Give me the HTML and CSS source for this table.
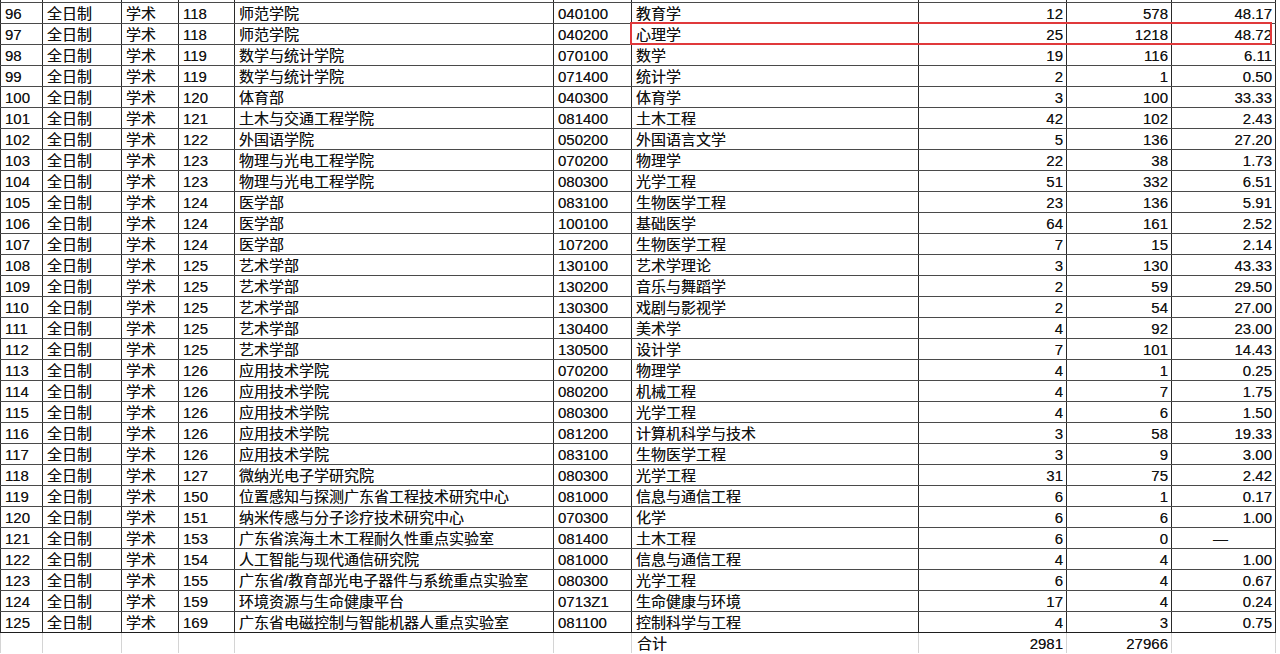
FILE: index.html
```html
<!DOCTYPE html>
<html lang="zh-CN">
<head>
<meta charset="utf-8">
<title>招生数据</title>
<link rel="stylesheet" href="styles.css">
</head>
<body>
<div class="sheet">
<table class="grid">
<colgroup>
<col class="w-a"><col class="w-b"><col class="w-c"><col class="w-d"><col class="w-e"><col class="w-f"><col class="w-g"><col class="w-h"><col class="w-i"><col class="w-j">
</colgroup>
<tbody>
<tr class="stub"><td></td><td></td><td></td><td></td><td></td><td></td><td></td><td></td><td></td><td></td></tr>
<tr><td>96</td><td>全日制</td><td>学术</td><td>118</td><td>师范学院</td><td>040100</td><td>教育学</td><td class="num">12</td><td class="num">578</td><td class="num">48.17</td></tr>
<tr><td>97</td><td>全日制</td><td>学术</td><td>118</td><td>师范学院</td><td>040200</td><td>心理学</td><td class="num">25</td><td class="num">1218</td><td class="num">48.72</td></tr>
<tr><td>98</td><td>全日制</td><td>学术</td><td>119</td><td>数学与统计学院</td><td>070100</td><td>数学</td><td class="num">19</td><td class="num">116</td><td class="num">6.11</td></tr>
<tr><td>99</td><td>全日制</td><td>学术</td><td>119</td><td>数学与统计学院</td><td>071400</td><td>统计学</td><td class="num">2</td><td class="num">1</td><td class="num">0.50</td></tr>
<tr><td>100</td><td>全日制</td><td>学术</td><td>120</td><td>体育部</td><td>040300</td><td>体育学</td><td class="num">3</td><td class="num">100</td><td class="num">33.33</td></tr>
<tr><td>101</td><td>全日制</td><td>学术</td><td>121</td><td>土木与交通工程学院</td><td>081400</td><td>土木工程</td><td class="num">42</td><td class="num">102</td><td class="num">2.43</td></tr>
<tr><td>102</td><td>全日制</td><td>学术</td><td>122</td><td>外国语学院</td><td>050200</td><td>外国语言文学</td><td class="num">5</td><td class="num">136</td><td class="num">27.20</td></tr>
<tr><td>103</td><td>全日制</td><td>学术</td><td>123</td><td>物理与光电工程学院</td><td>070200</td><td>物理学</td><td class="num">22</td><td class="num">38</td><td class="num">1.73</td></tr>
<tr><td>104</td><td>全日制</td><td>学术</td><td>123</td><td>物理与光电工程学院</td><td>080300</td><td>光学工程</td><td class="num">51</td><td class="num">332</td><td class="num">6.51</td></tr>
<tr><td>105</td><td>全日制</td><td>学术</td><td>124</td><td>医学部</td><td>083100</td><td>生物医学工程</td><td class="num">23</td><td class="num">136</td><td class="num">5.91</td></tr>
<tr><td>106</td><td>全日制</td><td>学术</td><td>124</td><td>医学部</td><td>100100</td><td>基础医学</td><td class="num">64</td><td class="num">161</td><td class="num">2.52</td></tr>
<tr><td>107</td><td>全日制</td><td>学术</td><td>124</td><td>医学部</td><td>107200</td><td>生物医学工程</td><td class="num">7</td><td class="num">15</td><td class="num">2.14</td></tr>
<tr><td>108</td><td>全日制</td><td>学术</td><td>125</td><td>艺术学部</td><td>130100</td><td>艺术学理论</td><td class="num">3</td><td class="num">130</td><td class="num">43.33</td></tr>
<tr><td>109</td><td>全日制</td><td>学术</td><td>125</td><td>艺术学部</td><td>130200</td><td>音乐与舞蹈学</td><td class="num">2</td><td class="num">59</td><td class="num">29.50</td></tr>
<tr><td>110</td><td>全日制</td><td>学术</td><td>125</td><td>艺术学部</td><td>130300</td><td>戏剧与影视学</td><td class="num">2</td><td class="num">54</td><td class="num">27.00</td></tr>
<tr><td>111</td><td>全日制</td><td>学术</td><td>125</td><td>艺术学部</td><td>130400</td><td>美术学</td><td class="num">4</td><td class="num">92</td><td class="num">23.00</td></tr>
<tr><td>112</td><td>全日制</td><td>学术</td><td>125</td><td>艺术学部</td><td>130500</td><td>设计学</td><td class="num">7</td><td class="num">101</td><td class="num">14.43</td></tr>
<tr><td>113</td><td>全日制</td><td>学术</td><td>126</td><td>应用技术学院</td><td>070200</td><td>物理学</td><td class="num">4</td><td class="num">1</td><td class="num">0.25</td></tr>
<tr><td>114</td><td>全日制</td><td>学术</td><td>126</td><td>应用技术学院</td><td>080200</td><td>机械工程</td><td class="num">4</td><td class="num">7</td><td class="num">1.75</td></tr>
<tr><td>115</td><td>全日制</td><td>学术</td><td>126</td><td>应用技术学院</td><td>080300</td><td>光学工程</td><td class="num">4</td><td class="num">6</td><td class="num">1.50</td></tr>
<tr><td>116</td><td>全日制</td><td>学术</td><td>126</td><td>应用技术学院</td><td>081200</td><td>计算机科学与技术</td><td class="num">3</td><td class="num">58</td><td class="num">19.33</td></tr>
<tr><td>117</td><td>全日制</td><td>学术</td><td>126</td><td>应用技术学院</td><td>083100</td><td>生物医学工程</td><td class="num">3</td><td class="num">9</td><td class="num">3.00</td></tr>
<tr><td>118</td><td>全日制</td><td>学术</td><td>127</td><td>微纳光电子学研究院</td><td>080300</td><td>光学工程</td><td class="num">31</td><td class="num">75</td><td class="num">2.42</td></tr>
<tr><td>119</td><td>全日制</td><td>学术</td><td>150</td><td>位置感知与探测广东省工程技术研究中心</td><td>081000</td><td>信息与通信工程</td><td class="num">6</td><td class="num">1</td><td class="num">0.17</td></tr>
<tr><td>120</td><td>全日制</td><td>学术</td><td>151</td><td>纳米传感与分子诊疗技术研究中心</td><td>070300</td><td>化学</td><td class="num">6</td><td class="num">6</td><td class="num">1.00</td></tr>
<tr><td>121</td><td>全日制</td><td>学术</td><td>153</td><td>广东省滨海土木工程耐久性重点实验室</td><td>081400</td><td>土木工程</td><td class="num">6</td><td class="num">0</td><td class="dash">—</td></tr>
<tr><td>122</td><td>全日制</td><td>学术</td><td>154</td><td>人工智能与现代通信研究院</td><td>081000</td><td>信息与通信工程</td><td class="num">4</td><td class="num">4</td><td class="num">1.00</td></tr>
<tr><td>123</td><td>全日制</td><td>学术</td><td>155</td><td>广东省/教育部光电子器件与系统重点实验室</td><td>080300</td><td>光学工程</td><td class="num">6</td><td class="num">4</td><td class="num">0.67</td></tr>
<tr><td>124</td><td>全日制</td><td>学术</td><td>159</td><td>环境资源与生命健康平台</td><td>0713Z1</td><td>生命健康与环境</td><td class="num">17</td><td class="num">4</td><td class="num">0.24</td></tr>
<tr class="last"><td>125</td><td>全日制</td><td>学术</td><td>169</td><td>广东省电磁控制与智能机器人重点实验室</td><td>081100</td><td>控制科学与工程</td><td class="num">4</td><td class="num">3</td><td class="num">0.75</td></tr>
<tr class="total"><td></td><td></td><td></td><td></td><td></td><td></td><td class="total-label">合计</td><td class="num">2981</td><td class="num">27966</td><td></td></tr>
</tbody>
</table>
<div class="highlight"></div>
</div>
</body>
</html>
```

FILE: styles.css
```css
html, body {
  margin: 0;
  padding: 0;
  background: #ffffff;
}

body {
  width: 1280px;
  height: 654px;
  overflow: hidden;
  font-family: "Liberation Sans", "Noto Sans CJK SC", sans-serif;
  font-size: 15px;
  color: #111111;
}

.sheet {
  position: relative;
  width: 1280px;
}

.grid {
  border-collapse: collapse;
  table-layout: fixed;
  width: 1275px;
}

.w-a { width: 42px; }
.w-b { width: 79px; }
.w-c { width: 57px; }
.w-d { width: 56px; }
.w-e { width: 319px; }
.w-f { width: 78px; }
.w-g { width: 287px; }
.w-h { width: 148px; }
.w-i { width: 105px; }
.w-j { width: 104px; }

.grid td {
  box-sizing: border-box;
  height: 21px;
  line-height: 19px;
  padding: 1px 3px 0 4px;
  border-top: 1px solid #4a4a4a;
  border-bottom: 1px solid #4a4a4a;
  border-left: 1px solid #2a2a2a;
  border-right: 1px solid #2a2a2a;
  white-space: nowrap;
  overflow: hidden;
  vertical-align: middle;
  text-shadow: 0 0 0.5px rgba(0, 0, 0, 0.55);
}

.grid tr.stub td {
  height: 2px;
  line-height: 1px;
  padding: 0;
  border-top: none;
}

.grid td.num {
  text-align: right;
}

.grid td.dash {
  text-align: center;
  padding-right: 10px;
}

.grid tr.last td {
  border-bottom: 1px solid #1e1e1e;
}

.grid tr.total td {
  border-left-color: #d4d4d4;
  border-right-color: #d4d4d4;
  border-bottom: none;
}

.grid tr.total td.total-label {
  border-left: 1px solid #2a2a2a;
  padding-left: 5px;
}

.highlight {
  position: absolute;
  left: 630px;
  top: 22px;
  width: 638px;
  height: 19px;
  border: 2px solid #e0393b;
  pointer-events: none;
}
```
